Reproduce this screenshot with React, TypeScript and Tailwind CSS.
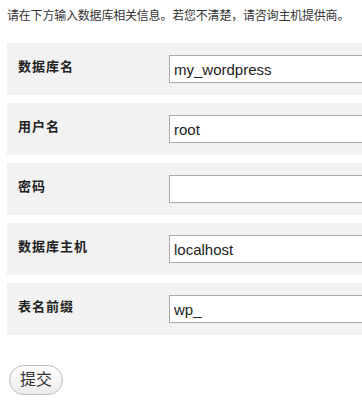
const fields = [
  { label: '数据库名', value: 'my_wordpress' },
  { label: '用户名', value: 'root' },
  { label: '密码', value: '' },
  { label: '数据库主机', value: 'localhost' },
  { label: '表名前缀', value: 'wp_' },
]

export default function App() {
  return (
    <div
      className="w-[362px] h-[404px] overflow-hidden bg-white pl-[7px] text-[#333]"
      style={{ fontFamily: '"Liberation Sans", "Noto Sans CJK SC", sans-serif' }}
    >
      <p className="mt-[7px] text-[12px] leading-[18px] whitespace-nowrap tracking-[-0.2px]">
        请在下方输入数据库相关信息。若您不清楚，请咨询主机提供商。
      </p>

      <div className="mt-[18px] flex flex-col gap-2 w-[420px]">
        {fields.map(f => (
          <div key={f.label} className="h-[52px] flex items-center bg-[#f2f2f2]">
            <div className="w-[162px] pl-[11px] mb-[5px] text-[13px] font-bold tracking-[1px] text-[#222]">
              {f.label}
            </div>
            <input
              defaultValue={f.value}
              className="h-[28px] w-[240px] border border-[#aaa] bg-white pl-[4px] text-[15px] text-[#222] outline-none"
              style={{ fontFamily: '"Liberation Sans", Arial, sans-serif' }}
            />
          </div>
        ))}
      </div>

      <button className="mt-[30px] ml-[2px] h-[30px] w-[54px] rounded-full border border-[#bbb] bg-gradient-to-b from-white to-[#ececec] text-[16px] text-[#333]">
        提交
      </button>
    </div>
  )
}
